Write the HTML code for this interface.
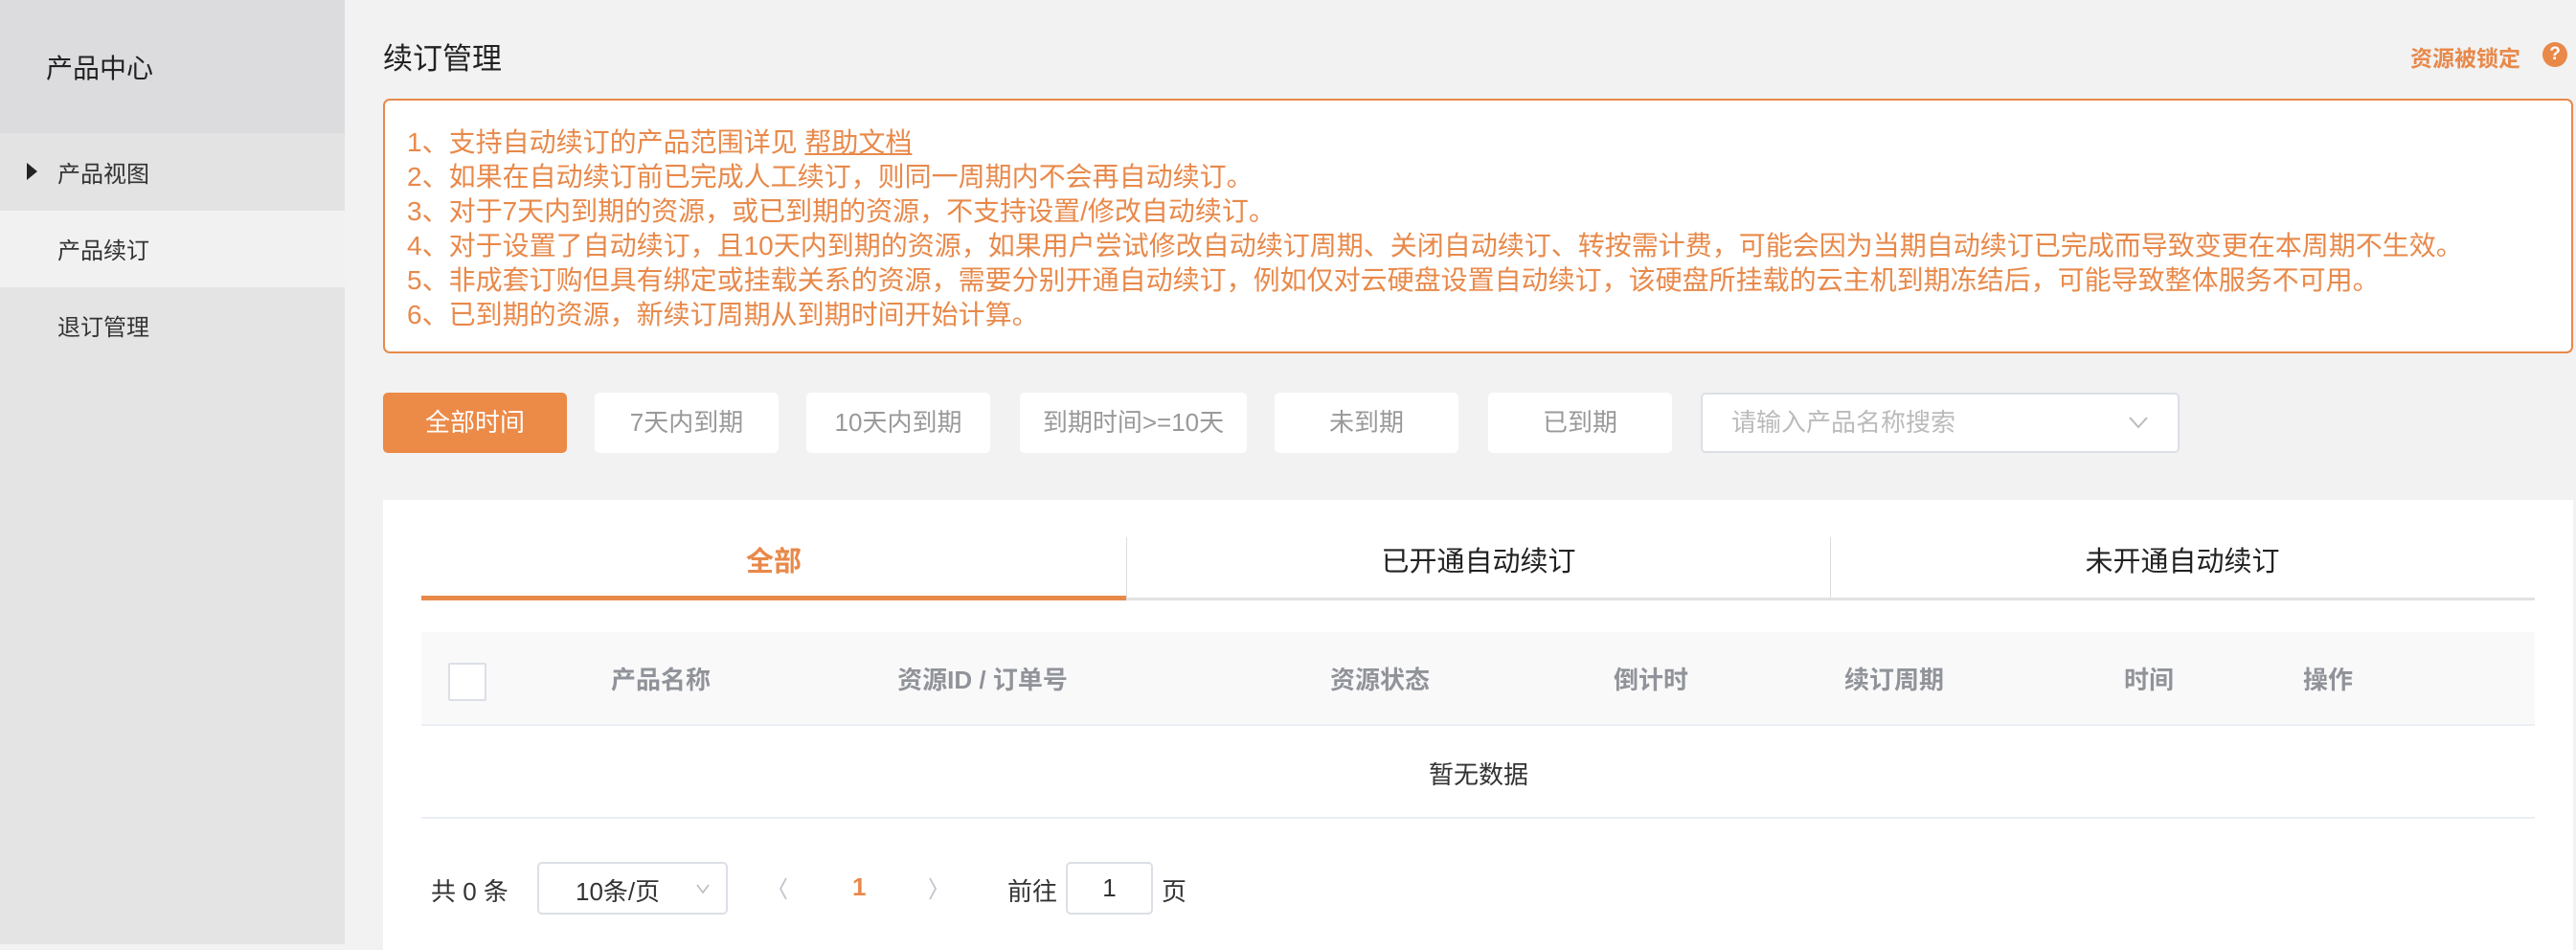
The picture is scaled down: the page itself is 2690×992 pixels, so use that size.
<!DOCTYPE html>
<html><head><meta charset="utf-8">
<style>
*{margin:0;padding:0;box-sizing:border-box}
body{width:2690px;height:986px;background:#f2f2f2;font-family:"Liberation Sans","Noto Sans CJK SC",sans-serif;position:relative;overflow:hidden;color:#333}
.abs{position:absolute;white-space:nowrap}
.side{position:absolute;left:0;top:0;width:360px;height:986px;background:#e4e4e4}
.sidetop{position:absolute;left:0;top:0;width:360px;height:139px;background:#dcdcde}
.o{color:#e8894a}
.note{position:absolute;left:400px;top:103px;width:2287px;height:266px;border:2px solid #e8894a;border-radius:7px;background:#fff}
.note div{position:absolute;left:23px;font-size:28px;color:#e8894a;line-height:32px}
.btn{position:absolute;top:410px;height:63px;background:#fff;border-radius:5px;font-size:26px;color:#999;text-align:center;line-height:63px}
.panel{position:absolute;left:400px;top:522px;width:2287px;height:470px;background:#fff}
.th{position:absolute;top:690px;font-size:26px;font-weight:bold;color:#909399;transform:translateX(-50%)}
</style></head><body>
<div class="side"></div>
<div class="sidetop"></div>
<div class="abs" style="left:48px;top:50px;font-size:28px;color:#222">产品中心</div>
<div class="abs" style="left:0;top:139px;width:360px;height:81px;background:#e3e3e3"></div>
<div class="abs" style="left:28px;top:170px;width:0;height:0;border-top:9px solid transparent;border-bottom:9px solid transparent;border-left:11px solid #222"></div>
<div class="abs" style="left:60px;top:162px;font-size:24px;color:#333">产品视图</div>
<div class="abs" style="left:0;top:220px;width:360px;height:80px;background:#f1f1f1"></div>
<div class="abs" style="left:60px;top:242px;font-size:24px;color:#333">产品续订</div>
<div class="abs" style="left:60px;top:322px;font-size:24px;color:#333">退订管理</div>

<div class="abs" style="left:400px;top:36px;font-size:31px;color:#222">续订管理</div>
<div class="abs o" style="left:2517px;top:42px;font-size:23px;font-weight:bold">资源被锁定</div>
<div class="abs" style="left:2655px;top:44px;width:26px;height:26px;border-radius:50%;background:#e8894a;color:#fff;font-size:19px;font-weight:bold;text-align:center;line-height:26px">?</div>

<div class="note">
<div style="top:28px">1、支持自动续订的产品范围详见 <span style="text-decoration:underline">帮助文档</span></div>
<div style="top:64px">2、如果在自动续订前已完成人工续订，则同一周期内不会再自动续订。</div>
<div style="top:100px">3、对于7天内到期的资源，或已到期的资源，不支持设置/修改自动续订。</div>
<div style="top:136px">4、对于设置了自动续订，且10天内到期的资源，如果用户尝试修改自动续订周期、关闭自动续订、转按需计费，可能会因为当期自动续订已完成而导致变更在本周期不生效。</div>
<div style="top:172px">5、非成套订购但具有绑定或挂载关系的资源，需要分别开通自动续订，例如仅对云硬盘设置自动续订，该硬盘所挂载的云主机到期冻结后，可能导致整体服务不可用。</div>
<div style="top:208px">6、已到期的资源，新续订周期从到期时间开始计算。</div>
</div>

<div class="btn" style="left:400px;width:192px;background:#ec8a48;color:#fff">全部时间</div>
<div class="btn" style="left:621px;width:192px">7天内到期</div>
<div class="btn" style="left:842px;width:192px">10天内到期</div>
<div class="btn" style="left:1065px;width:237px">到期时间>=10天</div>
<div class="btn" style="left:1331px;width:192px">未到期</div>
<div class="btn" style="left:1554px;width:192px">已到期</div>
<div class="btn" style="left:1776px;width:500px;border:2px solid #dcdfe6;text-align:left;padding-left:30px;line-height:59px;color:#bbb">请输入产品名称搜索
<svg style="position:absolute;right:30px;top:22px" width="22" height="14" viewBox="0 0 22 14"><path d="M2 2 L11 12 L20 2" fill="none" stroke="#bbb" stroke-width="2"/></svg></div>

<div class="panel"></div>
<div class="abs" style="left:440px;top:624px;width:2207px;height:3px;background:#e2e2e2"></div>
<div class="abs" style="left:440px;top:622px;width:736px;height:5px;background:#e8894a"></div>
<div class="abs" style="left:1176px;top:561px;width:1px;height:63px;background:#ddd"></div>
<div class="abs" style="left:1911px;top:561px;width:1px;height:63px;background:#ddd"></div>
<div class="abs o" style="left:808px;top:563px;width:0;font-size:29px;font-weight:bold"><span style="position:absolute;transform:translateX(-50%)">全部</span></div>
<div class="abs" style="left:1544px;top:563px;font-size:29px;color:#222;transform:translateX(-50%)">已开通自动续订</div>
<div class="abs" style="left:2279px;top:563px;font-size:29px;color:#222;transform:translateX(-50%)">未开通自动续订</div>

<div class="abs" style="left:440px;top:660px;width:2207px;height:98px;background:#f9f9f9;border-bottom:2px solid #ebeef5"></div>
<div class="abs" style="left:468px;top:692px;width:40px;height:40px;background:#fff;border:2px solid #dcdfe6;border-radius:2px"></div>
<div class="th" style="left:690px">产品名称</div>
<div class="th" style="left:1026px">资源ID / 订单号</div>
<div class="th" style="left:1441px">资源状态</div>
<div class="th" style="left:1724px">倒计时</div>
<div class="th" style="left:1978px">续订周期</div>
<div class="th" style="left:2244px">时间</div>
<div class="th" style="left:2431px">操作</div>
<div class="abs" style="left:1544px;top:789px;font-size:26px;color:#333;transform:translateX(-50%)">暂无数据</div>
<div class="abs" style="left:440px;top:853px;width:2207px;height:2px;background:#ebeef5"></div>

<div class="abs" style="left:450px;top:911px;font-size:26px;color:#333">共 0 条</div>
<div class="abs" style="left:561px;top:900px;width:199px;height:55px;border:2px solid #dcdfe6;border-radius:5px;background:#fff"></div>
<div class="abs" style="left:601px;top:911px;font-size:26px;color:#333">10条/页</div>
<svg class="abs" style="left:726px;top:922px" width="16" height="12" viewBox="0 0 16 12"><path d="M2 2 L8 10 L14 2" fill="none" stroke="#bbb" stroke-width="1.6"/></svg>
<svg class="abs" style="left:812px;top:915px" width="12" height="26" viewBox="0 0 12 26"><path d="M9 2 L3 13 L9 24" fill="none" stroke="#c0c4cc" stroke-width="1.8"/></svg>
<div class="abs o" style="left:890px;top:911px;font-size:26px;font-weight:bold">1</div>
<svg class="abs" style="left:968px;top:915px" width="12" height="26" viewBox="0 0 12 26"><path d="M3 2 L9 13 L3 24" fill="none" stroke="#c0c4cc" stroke-width="1.8"/></svg>
<div class="abs" style="left:1052px;top:911px;font-size:26px;color:#333">前往</div>
<div class="abs" style="left:1113px;top:900px;width:91px;height:55px;border:2px solid #dcdfe6;border-radius:5px;background:#fff;text-align:center;line-height:51px;font-size:26px">1</div>
<div class="abs" style="left:1213px;top:911px;font-size:26px;color:#333">页</div>
</body></html>
